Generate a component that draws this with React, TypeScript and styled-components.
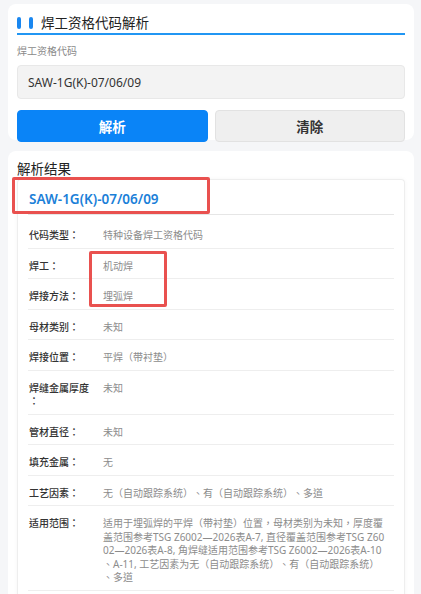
import React from "react";
import styled, { createGlobalStyle } from "styled-components";

const GlobalStyle = createGlobalStyle`
  html, body {
    margin: 0;
    padding: 0;
    background: #f5f6f8;
  }
  body {
    font-family: "Noto Sans", "Noto Sans CJK SC", sans-serif;
    color: #333;
    text-spacing-trim: space-all;
  }
  * { box-sizing: border-box; }
`;

const Page = styled.div`
  padding: 4px 7px 0 8px;
  display: flex;
  flex-direction: column;
  gap: 11px;
`;

const Card = styled.section<{ $bottom?: number }>`
  background: #fff;
  border-radius: 8px;
  padding: 8px 9px ${(p) => p.$bottom ?? 0}px 9px;
  display: flex;
  flex-direction: column;
`;

const TitleBar = styled.div`
  display: flex;
  align-items: center;
  height: 21px;
  border-bottom: 2px solid #2196f3;
  box-sizing: content-box;
`;

const Pill = styled.span`
  width: 4px;
  height: 12px;
  border-radius: 2px;
  background: #1a87f0;
  margin-right: 7.5px;
`;

const Title = styled.h1`
  margin: 0 0 0 1px;
  font-size: 13.5px;
  font-weight: 400;
  color: #222;
  line-height: 18px;
`;

const FieldLabel = styled.label`
  display: block;
  margin-top: 9px;
  font-size: 10px;
  line-height: 14px;
  color: #8a8a8a;
`;

const Input = styled.input`
  margin-top: 7px;
  height: 34px;
  width: 100%;
  border: 1px solid #e8e8e8;
  background: #f3f3f3;
  border-radius: 4px;
  padding: 0 10px;
  font-family: "Noto Sans", "Noto Sans CJK SC", sans-serif;
  font-size: 12px;
  color: #333;
  outline: none;
`;

const ButtonRow = styled.div`
  display: grid;
  grid-template-columns: 1fr 1fr;
  gap: 7px;
  margin-top: 11px;
  margin-bottom: -2px;
`;

const Button = styled.button<{ $primary?: boolean }>`
  height: 32px;
  border-radius: 4px;
  border: 1px solid ${(p) => (p.$primary ? "#0a84f7" : "#e2e2e2")};
  background: ${(p) => (p.$primary ? "#0a84f7" : "#efefef")};
  color: ${(p) => (p.$primary ? "#fff" : "#333")};
  font-family: "Noto Sans", "Noto Sans CJK SC", sans-serif;
  font-size: 13.5px;
  font-weight: 700;
  padding: 0;
`;

const SectionTitle = styled.h2`
  margin: 1px 0 0 0;
  font-size: 13.5px;
  font-weight: 400;
  color: #222;
  line-height: 18px;
`;

const ResultCard = styled.div`
  position: relative;
  margin-top: 1px;
  background: #fff;
  border: 1px solid #eeeeee;
  border-bottom: none;
  border-radius: 4px 4px 0 0;
  box-shadow: 0 0 4px rgba(0, 0, 0, 0.04);
  padding: 0 10px 12px 10px;
`;

const ResultHead = styled.div`
  padding: 10px 0 6px 1px;
  border-bottom: 1px solid #e6e6e6;
  margin-bottom: 3px;
  font-size: 13.5px;
  line-height: 18px;
  font-weight: 600;
  color: #1b80d8;
`;

const Row = styled.div`
  display: flex;
  align-items: flex-start;
  padding: 11px 0 5px 1px;
  border-bottom: 1px solid #eeeeee;
  font-size: 10px;
  line-height: 13.5px;
  line-break: anywhere;
`;

const Key = styled.div`
  flex: 0 0 66px;
  margin-right: 8px;
  color: #333;
  font-weight: 500;
  font-family: "Noto Sans", "Noto Sans CJK TC", sans-serif;
`;

const Value = styled.div`
  flex: 1;
  padding-right: 6px;
  color: #8c8c8c;
  word-break: break-all;
  font-family: "Noto Sans", "Noto Sans CJK TC", sans-serif;
`;

const Mark = styled.div<{ $l: number; $t: number; $w: number; $h: number }>`
  position: absolute;
  left: ${(p) => p.$l}px;
  top: ${(p) => p.$t}px;
  width: ${(p) => p.$w}px;
  height: ${(p) => p.$h}px;
  border: 3px solid #e9514f;
  border-radius: 2px;
  pointer-events: none;
`;

const rows: [string, string][] = [
  ["代码类型：", "特种设备焊工资格代码"],
  ["焊工：", "机动焊"],
  ["焊接方法：", "埋弧焊"],
  ["母材类别：", "未知"],
  ["焊接位置：", "平焊（带衬垫）"],
  ["焊缝金属厚度：", "未知"],
  ["管材直径：", "未知"],
  ["填充金属：", "无"],
  ["工艺因素：", "无（自动跟踪系统）、有（自动跟踪系统）、多道"],
  [
    "适用范围：",
    "适用于埋弧焊的平焊（带衬垫）位置，母材类别为未知，厚度覆盖范围参考TSG Z6002—2026表A-7, 直径覆盖范围参考TSG Z6002—2026表A-8, 角焊缝适用范围参考TSG Z6002—2026表A-10、A-11, 工艺因素为无（自动跟踪系统）、有（自动跟踪系统）、多道",
  ],
];

export default function App() {
  return (
    <>
      <GlobalStyle />
      <Page>
        <Card $bottom={0}>
          <TitleBar>
            <Pill />
            <Pill />
            <Title>焊工资格代码解析</Title>
          </TitleBar>
          <FieldLabel>焊工资格代码</FieldLabel>
          <Input defaultValue="SAW-1G(K)-07/06/09" />
          <ButtonRow>
            <Button $primary>解析</Button>
            <Button>清除</Button>
          </ButtonRow>
        </Card>
        <Card>
          <SectionTitle>解析结果</SectionTitle>
          <ResultCard>
            <ResultHead>SAW-1G(K)-07/06/09</ResultHead>
            {rows.map(([k, v]) => (
              <Row key={k}>
                <Key>{k}</Key>
                <Value>{v}</Value>
              </Row>
            ))}
            <Mark $l={-6} $t={-3} $w={198} $h={37} />
            <Mark $l={71} $t={71} $w={78} $h={56} />
          </ResultCard>
        </Card>
      </Page>
    </>
  );
}
